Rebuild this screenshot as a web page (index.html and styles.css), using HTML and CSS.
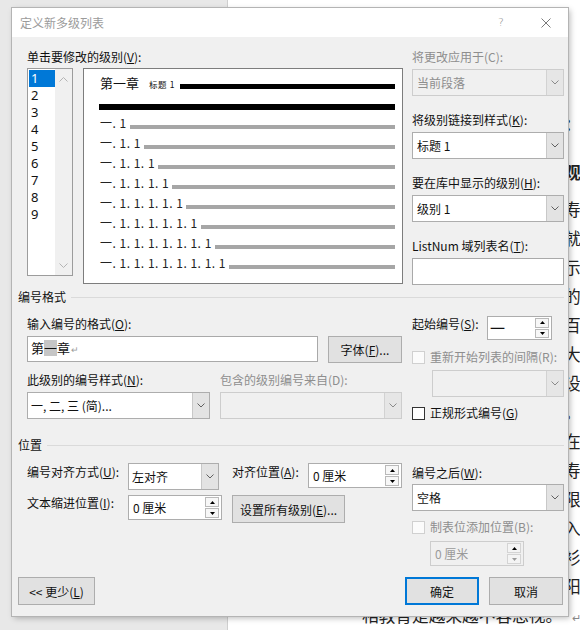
FILE: index.html
```html
<!DOCTYPE html>
<html lang="zh-CN">
<head>
<meta charset="utf-8">
<title>定义新多级列表</title>
<link rel="stylesheet" href="styles.css">
</head>
<body>
<div class="app">
  <div class="app-side"></div>
  <div class="page">
    <p class="doc-line doc-edge doc-head">：</p>
    <p class="doc-line doc-edge doc-head doc-head2">观</p>
    <div class="doc-body">
      <p class="doc-line doc-edge">寿</p>
      <p class="doc-line doc-edge">就</p>
      <p class="doc-line doc-edge">示</p>
      <p class="doc-line doc-edge">的</p>
      <p class="doc-line doc-edge">百</p>
      <p class="doc-line doc-edge">大</p>
      <p class="doc-line doc-edge">设</p>
      <p class="doc-line doc-edge">。</p>
      <p class="doc-line doc-edge">在</p>
      <p class="doc-line doc-edge">寿</p>
      <p class="doc-line doc-edge">限</p>
      <p class="doc-line doc-edge">入</p>
      <p class="doc-line doc-edge">衫</p>
      <p class="doc-line doc-edge">阳</p>
      <p class="doc-line">相教育是越来越不容忽视。<span class="para-mark">↵</span></p>
    </div>
  </div>
</div>

<div class="dialog">
  <div class="titlebar">
    <span class="title">定义新多级列表</span>
    <span class="tb-btn tb-help">?</span>
    <span class="tb-btn tb-close"><svg width="10" height="10" viewBox="0 0 10 10"><path d="M0.5 0.5L9.5 9.5M9.5 0.5L0.5 9.5" fill="none" stroke="#7a7a7a" stroke-width="1"/></svg></span>
  </div>

  <div class="dlg-body">
    <div class="cols top">
      <div class="top-left">
        <div class="label">单击要修改的级别(<u>V</u>):</div>
        <div class="top-row">
          <div class="levels">
            <ul class="level-items">
              <li class="sel">1</li>
              <li>2</li>
              <li>3</li>
              <li>4</li>
              <li>5</li>
              <li>6</li>
              <li>7</li>
              <li>8</li>
              <li>9</li>
            </ul>
            <div class="vscroll">
              <svg width="9" height="5" viewBox="0 0 9 5"><path d="M0.5 4.5L4.5 0.5L8.5 4.5" fill="none" stroke="#b4b4b4"/></svg>
              <svg width="9" height="5" viewBox="0 0 9 5"><path d="M0.5 0.5L4.5 4.5L8.5 0.5" fill="none" stroke="#b4b4b4"/></svg>
            </div>
          </div>
          <div class="preview">
            <div class="pv-head">
              <span class="pv-chapter">第一章</span>
              <span class="pv-style">标题 1</span>
              <span class="pv-bar pv-bar-black"></span>
            </div>
            <div class="pv-full"></div>
            <div class="pv-row"><span class="pv-num">一. 1</span><span class="pv-bar"></span></div>
            <div class="pv-row"><span class="pv-num">一. 1. 1</span><span class="pv-bar"></span></div>
            <div class="pv-row"><span class="pv-num">一. 1. 1. 1</span><span class="pv-bar"></span></div>
            <div class="pv-row"><span class="pv-num">一. 1. 1. 1. 1</span><span class="pv-bar"></span></div>
            <div class="pv-row"><span class="pv-num">一. 1. 1. 1. 1. 1</span><span class="pv-bar"></span></div>
            <div class="pv-row"><span class="pv-num">一. 1. 1. 1. 1. 1. 1</span><span class="pv-bar"></span></div>
            <div class="pv-row"><span class="pv-num">一. 1. 1. 1. 1. 1. 1. 1</span><span class="pv-bar"></span></div>
            <div class="pv-row"><span class="pv-num">一. 1. 1. 1. 1. 1. 1. 1. 1</span><span class="pv-bar"></span></div>
          </div>
        </div>
      </div>

      <div class="top-right">
        <div class="field">
          <div class="label dis">将更改应用于(C):</div>
          <div class="combo dis"><span class="combo-text">当前段落</span><span class="combo-btn"><svg width="8" height="5" viewBox="0 0 8 5"><path d="M0.5 0.5L4 4L7.5 0.5" fill="none" stroke="#8a8a8a"/></svg></span></div>
        </div>
        <div class="field">
          <div class="label">将级别链接到样式(<u>K</u>):</div>
          <div class="combo"><span class="combo-text">标题 1</span><span class="combo-btn"><svg width="8" height="5" viewBox="0 0 8 5"><path d="M0.5 0.5L4 4L7.5 0.5" fill="none" stroke="#606060"/></svg></span></div>
        </div>
        <div class="field">
          <div class="label">要在库中显示的级别(<u>H</u>):</div>
          <div class="combo"><span class="combo-text">级别 1</span><span class="combo-btn"><svg width="8" height="5" viewBox="0 0 8 5"><path d="M0.5 0.5L4 4L7.5 0.5" fill="none" stroke="#606060"/></svg></span></div>
        </div>
        <div class="field">
          <div class="label">ListNum 域列表名(<u>T</u>):</div>
          <div class="textbox"></div>
        </div>
      </div>
    </div>

    <div class="group-head"><span>编号格式</span></div>

    <div class="cols sec2">
      <div class="sec2-left">
        <div class="label">输入编号的格式(<u>O</u>):</div>
        <div class="fmt-row">
          <div class="textbox fmt-box"><span>第<span class="hl">一</span>章<span class="ret">↵</span></span></div>
          <div class="btn font-btn"><span>字体(<u>F</u>)...</span></div>
        </div>
        <div class="style-labels">
          <div class="label">此级别的编号样式(<u>N</u>):</div>
          <div class="label dis">包含的级别编号来自(D):</div>
        </div>
        <div class="style-row">
          <div class="combo"><span class="combo-text">一, 二, 三 (简)...</span><span class="combo-btn"><svg width="8" height="5" viewBox="0 0 8 5"><path d="M0.5 0.5L4 4L7.5 0.5" fill="none" stroke="#606060"/></svg></span></div>
          <div class="combo dis"><span class="combo-text"></span><span class="combo-btn"><svg width="8" height="5" viewBox="0 0 8 5"><path d="M0.5 0.5L4 4L7.5 0.5" fill="none" stroke="#8a8a8a"/></svg></span></div>
        </div>
      </div>
      <div class="sec2-right">
        <div class="start-row">
          <div class="label start-label">起始编号(<u>S</u>):</div>
          <div class="spin start-spin">
            <span class="spin-text start-text">一</span>
            <span class="spin-btns">
              <span><svg width="5" height="3" viewBox="0 0 5 3"><path d="M0 3L2.5 0L5 3Z" fill="#000"/></svg></span>
              <span><svg width="5" height="3" viewBox="0 0 5 3"><path d="M0 0L2.5 3L5 0Z" fill="#000"/></svg></span>
            </span>
          </div>
        </div>
        <div class="check dis restart"><span class="box"></span><span class="check-text">重新开始列表的间隔(R):</span></div>
        <div class="combo dis restart-combo"><span class="combo-text"></span><span class="combo-btn"><svg width="8" height="5" viewBox="0 0 8 5"><path d="M0.5 0.5L4 4L7.5 0.5" fill="none" stroke="#8a8a8a"/></svg></span></div>
        <div class="check legal"><span class="box"></span><span class="check-text">正规形式编号(<u>G</u>)</span></div>
      </div>
    </div>

    <div class="group-head"><span>位置</span></div>

    <div class="cols sec3">
      <div class="pos-grid">
        <div class="label pos-l1">编号对齐方式(<u>U</u>):</div>
        <div class="combo align-combo"><span class="combo-text">左对齐</span><span class="combo-btn"><svg width="8" height="5" viewBox="0 0 8 5"><path d="M0.5 0.5L4 4L7.5 0.5" fill="none" stroke="#606060"/></svg></span></div>
        <div class="label pos-l1 pos-c4">对齐位置(<u>A</u>):</div>
        <div class="spin pos-c5">
          <span class="spin-text">0 厘米</span>
          <span class="spin-btns">
            <span><svg width="5" height="3" viewBox="0 0 5 3"><path d="M0 3L2.5 0L5 3Z" fill="#000"/></svg></span>
            <span><svg width="5" height="3" viewBox="0 0 5 3"><path d="M0 0L2.5 3L5 0Z" fill="#000"/></svg></span>
          </span>
        </div>
        <div class="label">文本缩进位置(<u>I</u>):</div>
        <div class="spin">
          <span class="spin-text">0 厘米</span>
          <span class="spin-btns">
            <span><svg width="5" height="3" viewBox="0 0 5 3"><path d="M0 3L2.5 0L5 3Z" fill="#000"/></svg></span>
            <span><svg width="5" height="3" viewBox="0 0 5 3"><path d="M0 0L2.5 3L5 0Z" fill="#000"/></svg></span>
          </span>
        </div>
        <div class="btn all-btn"><span>设置所有级别(<u>E</u>)...</span></div>
      </div>
      <div class="sec3-right">
        <div class="label">编号之后(<u>W</u>):</div>
        <div class="combo after-combo"><span class="combo-text">空格</span><span class="combo-btn"><svg width="8" height="5" viewBox="0 0 8 5"><path d="M0.5 0.5L4 4L7.5 0.5" fill="none" stroke="#606060"/></svg></span></div>
        <div class="check dis tab-check"><span class="box"></span><span class="check-text">制表位添加位置(B):</span></div>
        <div class="spin dis tab-spin">
          <span class="spin-text">0 厘米</span>
          <span class="spin-btns">
            <span><svg width="5" height="3" viewBox="0 0 5 3"><path d="M0 3L2.5 0L5 3Z" fill="#000"/></svg></span>
            <span><svg width="5" height="3" viewBox="0 0 5 3"><path d="M0 0L2.5 3L5 0Z" fill="#9a9a9a"/></svg></span>
          </span>
        </div>
      </div>
    </div>

    <div class="footer">
      <div class="btn less-btn"><span>&lt;&lt; 更少(<u>L</u>)</span></div>
      <div class="footer-right">
        <div class="btn ok-btn">确定</div>
        <div class="btn">取消</div>
      </div>
    </div>
  </div>
</div>
</body>
</html>
```

FILE: styles.css
```css
* { box-sizing: border-box; }

html, body {
  margin: 0;
  padding: 0;
}

body {
  width: 580px;
  height: 630px;
  overflow: hidden;
  position: relative;
  font-family: "Noto Sans CJK SC", sans-serif;
  font-size: 12px;
  color: #111;
  background: #e8e8e8;
}

u { text-decoration: underline; text-underline-offset: 1px; }

/* ---------- background application ---------- */
.app {
  display: flex;
  height: 630px;
}

.app-side {
  width: 228px;
  flex: none;
  background: #e8e8e8;
  border-right: 1px solid #cfcfcf;
}

.page {
  flex: 1;
  background: #fff;
  padding: 110px 0 0 134px;
  overflow: hidden;
  white-space: nowrap;
  color: #222;
}

.doc-line {
  margin: 0;
  font-size: 16.7px;
  line-height: 29px;
  height: 29px;
  font-family: "Noto Sans CJK SC", sans-serif;
}

.doc-edge { padding-left: 202px; }

.doc-head { font-weight: 700; }
.doc-head2 { margin-top: 19px; }
.doc-body { margin-top: 8px; }

.para-mark {
  margin-left: 10px;
  font-size: 11px;
  color: #888;
}

/* ---------- dialog ---------- */
.dialog {
  position: absolute;
  left: 12px;
  top: 8px;
  width: 556px;
  height: 608px;
  background: #f0f0f0;
  box-shadow: 0 0 0 1px #b4b4b4, 2px 2px 6px rgba(0, 0, 0, 0.28);
  display: flex;
  flex-direction: column;
}

.titlebar {
  height: 29px;
  flex: none;
  background: #fff;
  display: flex;
  align-items: center;
  padding-left: 8px;
}

.title {
  color: #9b9b9b;
  font-size: 12px;
  line-height: 16px;
}

.tb-btn {
  height: 29px;
  display: flex;
  align-items: center;
  justify-content: center;
  color: #8a8a8a;
}

.tb-help {
  margin-left: auto;
  width: 46px;
  font-family: "DejaVu Sans", sans-serif;
  font-size: 11px;
  font-weight: 300;
}

.tb-close { width: 44px; }

.dlg-body {
  flex: 1;
  display: flex;
  flex-direction: column;
  padding: 0 4px 11px 6px;
}

.cols {
  display: grid;
  grid-template-columns: 376px 152px;
  column-gap: 9px;
  margin-left: 9px;
}

.label {
  height: 16px;
  line-height: 16px;
  white-space: nowrap;
}

.dis { color: #8e8e8e; }

/* ---------- top section ---------- */
.top { padding-top: 12px; }

.top-row {
  display: flex;
  align-items: flex-start;
  gap: 10px;
  margin-top: 3px;
}

.levels {
  width: 46px;
  height: 208px;
  border: 1px solid #9c9c9c;
  background: #fff;
  display: flex;
}

.level-items {
  list-style: none;
  margin: 0;
  padding: 1px 0 0 1px;
  width: 27px;
}

.level-items li {
  height: 17px;
  line-height: 17px;
  padding-left: 2px;
  font-size: 13px;
  font-family: "Noto Sans", sans-serif;
}

.level-items li.sel {
  background: #0078d7;
  color: #fff;
}

.vscroll {
  width: 17px;
  background: #f0f0f0;
  display: flex;
  flex-direction: column;
  justify-content: space-between;
  align-items: center;
  padding: 8px 0 7px;
}

.preview {
  width: 320px;
  height: 216px;
  background: #fff;
  border: 1px solid #7d7d7d;
  padding: 3px 7px 0 15px;
}

.pv-head {
  height: 22px;
  display: flex;
  align-items: center;
}

.pv-chapter {
  font-size: 13px;
  line-height: 22px;
  margin-left: 1px;
}

.pv-style {
  font-size: 8.5px;
  margin-left: 10px;
  margin-top: 2px;
  letter-spacing: 0.6px;
}

.pv-bar {
  flex: 1;
  height: 4px;
  background: #a6a6a6;
  margin-left: 3px;
  margin-top: 12px;
}

.pv-head .pv-bar {
  height: 5px;
  margin-top: 3px;
  align-self: center;
  background: #000;
  margin-left: 5px;
  position: relative;
  top: 2px;
}

.pv-full {
  height: 6px;
  background: #000;
  margin-top: 10px;
}

.pv-row {
  height: 20px;
  display: flex;
  align-items: flex-start;
}

.pv-full + .pv-row { margin-top: 3px; }

.pv-num {
  font-size: 12px;
  line-height: 20px;
  letter-spacing: 0.5px;
  color: #222;
  white-space: nowrap;
  margin-left: 1px;
}

.field { margin-bottom: 16px; }
.field:last-child { margin-bottom: 0; }
.field .label { margin-bottom: 4px; }

.combo {
  height: 27px;
  border: 1px solid #adadad;
  background: #fff;
  display: flex;
}

.combo-text {
  flex: 1;
  padding-left: 4px;
  line-height: 25px;
  font-size: 12px;
  white-space: nowrap;
  overflow: hidden;
}

.combo-btn {
  width: 17px;
  flex: none;
  background: #e3e3e3;
  border-left: 1px solid #c8c8c8;
  display: flex;
  align-items: center;
  justify-content: center;
}

.combo.dis {
  background: #f0f0f0;
  border-color: #cdcdcd;
}

.combo.dis .combo-btn {
  background: #e6e6e6;
  border-left-color: #d2d2d2;
}

.textbox {
  height: 27px;
  border: 1px solid #a9a9a9;
  background: #fff;
}

/* ---------- group headings ---------- */
.group-head {
  display: flex;
  align-items: center;
  gap: 5px;
  height: 16px;
  line-height: 16px;
  margin-top: 4px;
}

.group-head::after {
  content: "";
  flex: 1;
  height: 1px;
  background: #dadada;
}

/* ---------- numbering format ---------- */
.sec2 { height: 128px; }

.sec2-left { padding-top: 11px; }

.fmt-row {
  display: flex;
  gap: 10px;
  margin-top: 4px;
}

.fmt-box {
  width: 291px;
  height: 26px;
  padding-left: 3px;
  font-size: 13px;
  line-height: 24px;
  display: flex;
  align-items: center;
}

.hl {
  background: #c6c6c6;
  line-height: 16px;
  height: 16px;
  display: inline-block;
}

.ret {
  font-size: 9px;
  color: #9a9a9a;
  margin-left: 1px;
}

.btn {
  height: 28px;
  border: 1px solid #adadad;
  background: #e1e1e1;
  display: flex;
  align-items: center;
  justify-content: center;
  white-space: nowrap;
  width: 74px;
}

.font-btn { height: 27px; }

.style-labels {
  display: grid;
  grid-template-columns: 183px 182px;
  column-gap: 10px;
  margin-top: 9px;
}

.style-row {
  display: grid;
  grid-template-columns: 183px 182px;
  column-gap: 10px;
  margin-top: 4px;
}

.style-row .combo-text { padding-left: 3px; }

.sec2-right { padding-top: 11px; }

.start-row {
  display: flex;
  align-items: flex-start;
}

.start-label { width: 75px; }

.spin {
  height: 25px;
  border: 1px solid #adadad;
  background: #fff;
  display: flex;
  width: 94px;
}

.spin-text {
  flex: 1;
  padding-left: 4px;
  line-height: 23px;
  white-space: nowrap;
}

.start-spin { width: 65px; height: 24px; }
.start-text { font-size: 15px; line-height: 22px; padding-left: 2px; }

.spin-btns {
  width: 16px;
  flex: none;
  display: flex;
  flex-direction: column;
  gap: 1px;
  padding: 1px 2px 1px 0;
}

.spin-btns span {
  flex: 1;
  border: 1px solid #b9b9b9;
  background: #f7f7f7;
  display: flex;
  align-items: center;
  justify-content: center;
}

.spin.dis {
  background: #f0f0f0;
  border-color: #cdcdcd;
  color: #9a9a9a;
}

.spin.dis .spin-btns span {
  border-color: #d4d4d4;
  background: #f4f4f4;
}

.check {
  display: flex;
  align-items: center;
  gap: 5px;
  height: 16px;
  line-height: 16px;
  white-space: nowrap;
}

.check .box {
  width: 13px;
  height: 13px;
  border: 1px solid #333;
  background: #fff;
  flex: none;
}

.check.dis .box {
  border-color: #d0d0d0;
  background: #fbfbfb;
}

.restart { margin-top: 9px; }

.restart-combo {
  margin-top: 5px;
  margin-left: 20px;
}

.legal { margin-top: 8px; }

/* ---------- position ---------- */
.pos-grid {
  display: grid;
  grid-template-columns: 101px 94px 10px 76px 94px;
  grid-template-rows: 27px 28px;
  row-gap: 5px;
  padding-top: 10px;
  align-items: start;
}

.pos-l1 { margin-top: 1px; }
.pos-c4 { grid-column: 4; }
.pos-c5 { grid-column: 5; }

.align-combo { width: 91px; }
.align-combo .combo-text { padding-left: 3px; }

.all-btn {
  grid-column: 4 / 6;
  width: 113px;
}

.sec3-right { padding-top: 12px; }

.after-combo { margin-top: 3px; }

.tab-check { margin-top: 8px; }

.tab-spin {
  margin-top: 6px;
  margin-left: 18px;
}

/* ---------- footer ---------- */
.footer {
  margin-top: auto;
  display: flex;
  justify-content: space-between;
  align-items: flex-end;
  padding-right: 1px;
}

.less-btn { width: 77px; }

.footer-right {
  display: flex;
  gap: 10px;
}

.ok-btn {
  border: 2px solid #0078d7;
}
```
